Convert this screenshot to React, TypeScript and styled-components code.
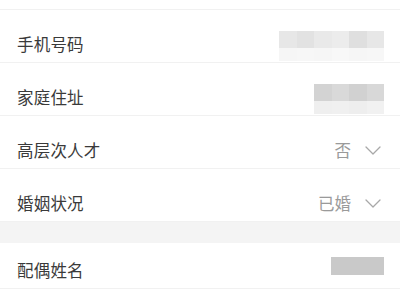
import React from 'react';
import styled, { createGlobalStyle } from 'styled-components';

const GlobalStyle = createGlobalStyle`
  html, body {
    margin: 0;
    padding: 0;
    background: #ffffff;
  }
  body {
    font-family: "Noto Sans CJK SC", "Noto Sans", sans-serif;
    -webkit-font-smoothing: antialiased;
  }
`;

interface Cell {
  color: string;
}

interface RowData {
  label: string;
  value?: string;
  mosaic?: { top: string[]; bottom: string[] };
  select?: boolean;
}

const groupOne: RowData[] = [
  {
    label: '手机号码',
    mosaic: {
      top: ['#e7e7e7', '#e2e2e2', '#e9e9e9', '#ececec', '#dfdfdf', '#e7e7e7'],
      bottom: ['#f6f6f6', '#f7f7f7', '#f6f6f6', '#f8f8f8', '#f6f6f6', '#f7f7f7'],
    },
  },
  {
    label: '家庭住址',
    mosaic: {
      top: ['#d3d3d3', '#d9d9d9', '#d1d1d1', '#d8d8d8'],
      bottom: ['#efefef', '#f0f0f0', '#eeeeee', '#f1f1f1'],
    },
  },
  { label: '高层次人才', value: '否', select: true },
  { label: '婚姻状况', value: '已婚', select: true },
];

export default function App() {
  return (
    <Page>
      <GlobalStyle />
      <TopStub />
      <Group>
        {groupOne.map((row) => (
          <FormRow key={row.label} {...row} />
        ))}
      </Group>
      <GroupGap />
      <Group>
        <Row compact>
          <Label>配偶姓名</Label>
          <SolidBlock />
        </Row>
      </Group>
    </Page>
  );
}

function FormRow({ label, value, mosaic, select }: RowData) {
  return (
    <Row>
      <Label>{label}</Label>
      <Right>
        {mosaic && (
          <Mosaic>
            <MosaicLine>
              {mosaic.top.map((c, i) => (
                <MosaicCell key={i} color={c} />
              ))}
            </MosaicLine>
            <MosaicLine faint>
              {mosaic.bottom.map((c, i) => (
                <MosaicCell key={i} color={c} />
              ))}
            </MosaicLine>
          </Mosaic>
        )}
        {value && <Value>{value}</Value>}
        {select && (
          <Chevron width="16" height="9" viewBox="0 0 16 9">
            <polyline
              points="1,1 8,8 15,1"
              fill="none"
              stroke="#a8a8a8"
              strokeWidth="1.3"
              strokeLinecap="round"
              strokeLinejoin="round"
            />
          </Chevron>
        )}
      </Right>
    </Row>
  );
}

const Page = styled.div`
  width: 400px;
  height: 299px;
  overflow: hidden;
  background: #ffffff;
`;

const TopStub = styled.div`
  height: 9px;
  border-bottom: 1px solid #f1f1f1;
`;

const Group = styled.div`
  display: flex;
  flex-direction: column;
  background: #ffffff;
`;

const GroupGap = styled.div`
  height: 21px;
  background: #f4f4f4;
`;

const Row = styled.div<{ compact?: boolean }>`
  display: flex;
  align-items: center;
  justify-content: space-between;
  padding: ${({ compact }) => (compact ? '17px 16px 8px 17px' : '24px 16px 8px 17px')};
  border-bottom: 1px solid #f1f1f1;
  height: 20px;
`;

const Label = styled.span`
  font-size: 16.5px;
  line-height: 20px;
  color: #3a3a3a;
  letter-spacing: 0.2px;
`;

const Right = styled.div`
  display: flex;
  align-items: center;
  height: 20px;
`;

const Value = styled.span`
  font-size: 16.5px;
  line-height: 20px;
  color: #9a9a9a;
`;

const Chevron = styled.svg`
  margin-left: 14px;
  margin-right: 3px;
  margin-top: 1px;
`;

const Mosaic = styled.div`
  display: flex;
  flex-direction: column;
  margin-top: 4px;
`;

const MosaicLine = styled.div<{ faint?: boolean }>`
  display: flex;
  height: ${({ faint }) => (faint ? '13px' : '17px')};
`;

const MosaicCell = styled.div<Cell>`
  width: 17.5px;
  background: ${({ color }) => color};
`;

const SolidBlock = styled.div`
  width: 53px;
  height: 18px;
  background: #c9c9c9;
  margin-top: -8px;
`;
